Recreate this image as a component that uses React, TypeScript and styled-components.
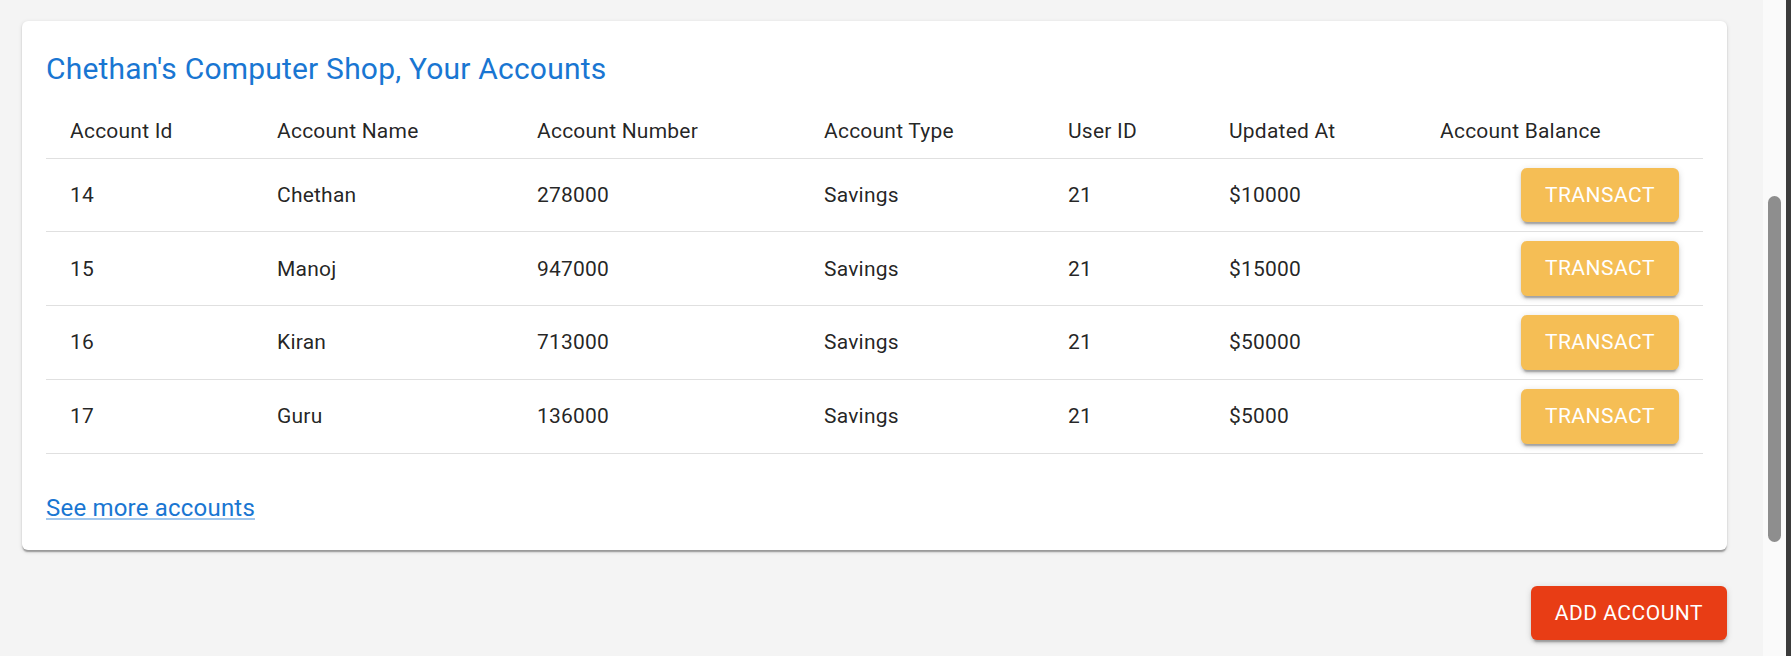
import React from "react";
import styled, { createGlobalStyle } from "styled-components";

const GlobalStyle = createGlobalStyle`
  html, body {
    margin: 0;
    padding: 0;
    background: #f4f4f4;
    font-family: Roboto, "Liberation Sans", Arial, sans-serif;
    color: rgba(0, 0, 0, 0.87);
  }
  * { box-sizing: border-box; }
`;

const Page = styled.div`
  display: flex;
  width: 100%;
  height: 656px;
  overflow: hidden;
`;

const Main = styled.main`
  flex: 1;
  display: flex;
  flex-direction: column;
  padding: 21px 36px 0 22px;
`;

const Card = styled.section`
  background: #fff;
  border-radius: 6px;
  padding: 24px;
  box-shadow: 0 3px 1.5px -1.5px rgba(0, 0, 0, 0.2),
    0 1.5px 1.5px 0 rgba(0, 0, 0, 0.14), 0 1.5px 4.5px 0 rgba(0, 0, 0, 0.12);
`;

const Title = styled.h2`
  margin: 0 0 10.5px;
  font-size: 30px;
  line-height: 48px;
  font-weight: 400;
  letter-spacing: 0.2px;
  color: #1976d2;
`;

const Table = styled.table`
  width: 100%;
  border-collapse: collapse;
  table-layout: fixed;
`;

const HeadCell = styled.th`
  text-align: left;
  font-weight: 400;
  font-size: 21px;
  line-height: 36px;
  letter-spacing: 0.22px;
  padding: 9px 36px 9px 24px;
  border-bottom: 1px solid #e0e0e0;
  color: rgba(0, 0, 0, 0.87);
  white-space: nowrap;
  &:last-child {
    padding-right: 24px;
  }
`;

const Cell = styled.td<{ $align?: "left" | "right" }>`
  text-align: ${(p) => p.$align ?? "left"};
  font-size: 21px;
  line-height: 36px;
  letter-spacing: 0.22px;
  padding: 9px 36px 9px 24px;
  border-bottom: 1px solid #e0e0e0;
  vertical-align: middle;
  color: rgba(0, 0, 0, 0.87);
  white-space: nowrap;
  &:last-child {
    padding-right: 24px;
  }
`;

const Button = styled.button<{ $tone: "warning" | "danger" }>`
  display: inline-flex;
  align-items: center;
  justify-content: center;
  border: none;
  border-radius: 6px;
  padding: 9px 24px;
  min-width: 96px;
  font-family: Roboto, "Liberation Sans", Arial, sans-serif;
  font-size: 21px;
  font-weight: 400;
  line-height: 36.75px;
  letter-spacing: 0.5px;
  text-transform: uppercase;
  color: #fff;
  background: ${(p) => (p.$tone === "warning" ? "#f5be55" : "#e83d15")};
  box-shadow: 0 4.5px 1.5px -3px rgba(0, 0, 0, 0.2),
    0 3px 3px 0 rgba(0, 0, 0, 0.14), 0 1.5px 7.5px 0 rgba(0, 0, 0, 0.12);
  cursor: pointer;
  vertical-align: middle;
`;

const MoreLink = styled.a`
  display: inline-block;
  margin-top: 36px;
  font-size: 24px;
  line-height: 36px;
  letter-spacing: 0.2px;
  color: #1976d2;
  text-decoration: underline;
  text-decoration-color: rgba(25, 118, 210, 0.4);
  cursor: pointer;
`;

const Actions = styled.div`
  display: flex;
  justify-content: flex-end;
  margin-top: 36px;
`;

const ScrollTrack = styled.div`
  width: 23px;
  background: #fafafa;
  display: flex;
  justify-content: center;
`;

const ScrollThumb = styled.div`
  width: 13px;
  height: 346px;
  margin-top: 196px;
  border-radius: 7px;
  background: #8e8e8e;
`;

const WindowEdge = styled.div`
  width: 5px;
  background: #3b3b3b;
`;

const columns = [
  { label: "Account Id", width: 207 },
  { label: "Account Name", width: 260 },
  { label: "Account Number", width: 287 },
  { label: "Account Type", width: 244 },
  { label: "User ID", width: 161 },
  { label: "Updated At", width: 211 },
  { label: "Account Balance", width: 287 },
];

const accounts = [
  { id: 14, name: "Chethan", number: "278000", type: "Savings", user: 21, balance: "$10000" },
  { id: 15, name: "Manoj", number: "947000", type: "Savings", user: 21, balance: "$15000" },
  { id: 16, name: "Kiran", number: "713000", type: "Savings", user: 21, balance: "$50000" },
  { id: 17, name: "Guru", number: "136000", type: "Savings", user: 21, balance: "$5000" },
];

export default function App() {
  return (
    <>
      <GlobalStyle />
      <Page>
        <Main>
          <Card>
            <Title>Chethan's Computer Shop, Your Accounts</Title>
            <Table>
              <colgroup>
                {columns.map((c) => (
                  <col key={c.label} style={{ width: c.width }} />
                ))}
              </colgroup>
              <thead>
                <tr>
                  {columns.map((c) => (
                    <HeadCell key={c.label}>{c.label}</HeadCell>
                  ))}
                </tr>
              </thead>
              <tbody>
                {accounts.map((a) => (
                  <tr key={a.id}>
                    <Cell>{a.id}</Cell>
                    <Cell>{a.name}</Cell>
                    <Cell>{a.number}</Cell>
                    <Cell>{a.type}</Cell>
                    <Cell>{a.user}</Cell>
                    <Cell>{a.balance}</Cell>
                    <Cell $align="right">
                      <Button $tone="warning">Transact</Button>
                    </Cell>
                  </tr>
                ))}
              </tbody>
            </Table>
            <MoreLink>See more accounts</MoreLink>
          </Card>
          <Actions>
            <Button $tone="danger">Add Account</Button>
          </Actions>
        </Main>
        <ScrollTrack>
          <ScrollThumb />
        </ScrollTrack>
        <WindowEdge />
      </Page>
    </>
  );
}
